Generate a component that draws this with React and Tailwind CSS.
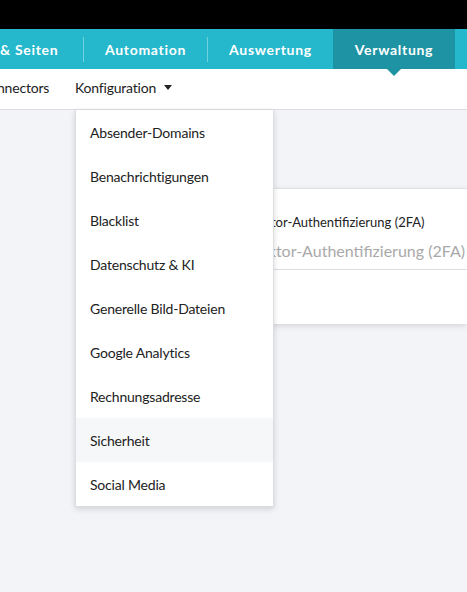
import { useState } from 'react';

const menuItems = [
  'Absender-Domains',
  'Benachrichtigungen',
  'Blacklist',
  'Datenschutz & KI',
  'Generelle Bild-Dateien',
  'Google Analytics',
  'Rechnungsadresse',
  'Sicherheit',
  'Social Media',
];

export default function App() {
  const [active] = useState('Sicherheit');

  return (
    <div className="relative w-full h-[592px] overflow-hidden bg-[#f3f4f8] font-['Lato',sans-serif] text-[#222]">
      <div className="h-[29px] bg-black" />

      {/* main nav */}
      <nav className="h-[40px] bg-[#25b7cb] flex items-stretch text-white font-bold text-[14px] tracking-[0.7px] whitespace-nowrap">
        <div className="w-[83px] flex items-center overflow-hidden">
          <span>&amp; Seiten</span>
        </div>
        <div className="w-px self-center h-[25px] bg-white/35" />
        <div className="w-[123px] flex items-center justify-center">Automation</div>
        <div className="w-px self-center h-[25px] bg-white/35" />
        <div className="w-[125px] flex items-center justify-center">Auswertung</div>
        <div className="relative w-[122px] flex items-center justify-center bg-[#1e93a3]">
          Verwaltung
          <span className="absolute left-1/2 -translate-x-1/2 top-full w-0 h-0 border-l-[7px] border-r-[7px] border-t-[7px] border-l-transparent border-r-transparent border-t-[#1e93a3]" />
        </div>
        <div className="flex-1" />
      </nav>

      {/* sub nav */}
      <div className="h-[41px] bg-white border-b border-[#dcdde1] flex items-center pb-[3px] text-[14px] tracking-[-0.2px] whitespace-nowrap">
        <span className="w-[78px] -ml-[3px]">nnectors</span>
        <span className="flex items-center gap-[8px]">
          Konfiguration
          <span className="w-0 h-0 border-l-[4px] border-r-[4px] border-t-[5px] border-l-transparent border-r-transparent border-t-[#222]" />
        </span>
      </div>

      {/* content card */}
      <div className="mt-[78px] ml-[200px] h-[136px] bg-white border-t border-[#dfe0e3] shadow-[0_2px_6px_rgba(0,0,0,0.12)] whitespace-nowrap">
        <div className="pl-[19px] pt-[24px] text-[13px] text-[#222]">Zwei-Faktor-Authentifizierung (2FA)</div>
        <div className="pl-[12px] pt-[6px] pb-[6px] text-[16px] text-[#a9a9a9] border-b border-[#dcdde0]">
          Zwei-Faktor-Authentifizierung (2FA)
        </div>
      </div>

      {/* dropdown */}
      <div className="absolute left-[75px] top-[110px] w-[199px] bg-white border border-[#dcdde1] border-t-0 shadow-[0_2px_6px_rgba(0,0,0,0.15)] text-[14px] tracking-[-0.2px]">
        {menuItems.map((item) => (
          <div
            key={item}
            className={`h-[44px] flex items-center px-[14px] ${item === active ? 'bg-[#f6f7f9]' : ''}`}
          >
            {item}
          </div>
        ))}
      </div>
    </div>
  );
}
